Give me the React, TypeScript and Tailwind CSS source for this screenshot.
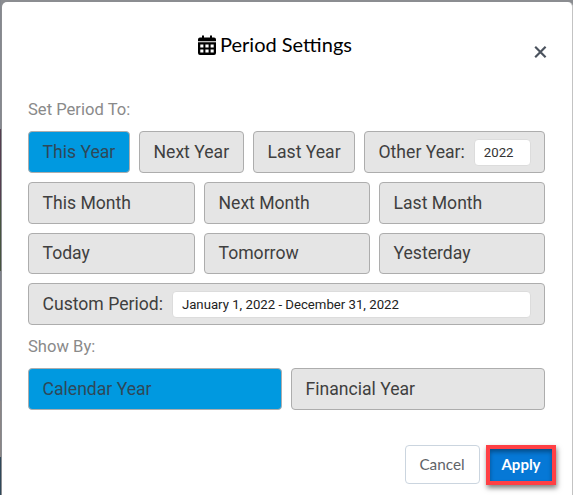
import React, { useState } from "react";

interface OptionProps {
  label: string;
  active?: boolean;
  className?: string;
  onClick?: () => void;
  children?: React.ReactNode;
}

const CalendarIcon = () => {
  return (
    <svg width="18" height="20" viewBox="0 0 18 20" fill="currentColor">
      <path d="M4 1.2a1 1 0 0 1 2 0V2.5h6V1.2a1 1 0 0 1 2 0V2.5h2a2 2 0 0 1 2 2V6.2H0V4.5a2 2 0 0 1 2-2h2z" />
      <path
        fillRule="evenodd"
        d="M0 7.2h18V18a2 2 0 0 1-2 2H2a2 2 0 0 1-2-2zM2.3 9.6v3h3.1v-3zM7.4 9.6v3h3.2v-3zM12.6 9.6v3h3.1v-3zM2.3 14.6v3h3.1v-3zM7.4 14.6v3h3.2v-3zM12.6 14.6v3h3.1v-3z"
      />
    </svg>
  );
};

const Option = ({ label, active, className, onClick, children }: OptionProps) => {
  return (
    <div
      onClick={onClick}
      className={`flex items-center rounded-[4px] border border-[#adadad] pl-[13.5px] text-[17.6px] leading-none whitespace-nowrap cursor-pointer ${
        active ? "bg-[#0099e0] text-[#2f4858]" : "bg-[#e5e5e5] text-[#3f3f3f]"
      } ${className ?? ""}`}
    >
      <span className="pt-px">{label}</span>
      {children}
    </div>
  );
};

const App = () => {
  const [period, setPeriod] = useState("This Year");
  const [showBy, setShowBy] = useState("Calendar Year");

  const option = (label: string) => (
    <Option
      key={label}
      label={label}
      active={period === label}
      onClick={() => setPeriod(label)}
    />
  );

  return (
    <div className="flex h-[495px] w-[573px] overflow-hidden bg-[#8b8d91] pt-[2px] font-['Roboto',sans-serif]">
      <div className="-mt-[2px] flex w-[1px] shrink-0 flex-col">
        <div className="h-[129px] bg-[#85888f]" />
        <div className="h-[71px] bg-[#553f50]" />
        <div className="h-[71px] bg-[#47543f]" />
        <div className="h-[130px] bg-[#7d808a]" />
        <div className="h-[56px] bg-[#8a8585]" />
        <div className="flex-1 bg-[#30485a]" />
      </div>
      <div className="ml-px flex h-[520px] w-[571px] shrink-0 flex-col rounded-[5px] border-r border-[#c3c3c3] bg-white pr-[27px] pl-[26px]">
        <div className="relative flex h-[88px] items-start justify-center pt-[31px] font-['Lato',sans-serif] text-black">
          <div className="flex items-center gap-[4px] pr-[23px]">
            <CalendarIcon />
            <h1 className="pb-[2px] text-[20px] leading-[22px]">Period Settings</h1>
          </div>
          <button className="absolute top-[44px] right-[-2px] text-[#4b535e]">
            <svg width="13" height="12" viewBox="0 0 13 12" fill="none">
              <path d="M1.2 0.8L11.6 11.2M11.6 0.8L1.2 11.2" stroke="currentColor" strokeWidth="2.2" />
            </svg>
          </button>
        </div>

        <p className="h-[41px] pt-[8px] text-[16.6px] leading-[24px] text-[#8a8a8a]">
          Set Period To:
        </p>
        <div className="grid h-[42px] grid-cols-[102px_105px_102px_181px] gap-[9px]">
          {["This Year", "Next Year", "Last Year"].map(option)}
          <Option label="Other Year:">
            <input
              className="ml-[9px] h-[27px] w-[57px] rounded-[4px] border border-[#dcdcdc] bg-white pl-[9px] text-[13.2px] text-[#333]"
              defaultValue="2022"
            />
          </Option>
        </div>
        <div className="mt-[9px] grid h-[92px] grid-cols-[167px_166px_166px] grid-rows-[42px_41px] gap-[9px]">
          {[
            "This Month",
            "Next Month",
            "Last Month",
            "Today",
            "Tomorrow",
            "Yesterday",
          ].map(option)}
        </div>
        <Option label="Custom Period:" className="mt-[9px] h-[42px] shrink-0">
          <input
            className="ml-[9px] h-[27px] w-[359px] rounded-[4px] border border-[#dcdcdc] bg-white pl-[9px] text-[13.2px] text-[#222]"
            defaultValue="January 1, 2022 - December 31, 2022"
          />
        </Option>

        <p className="h-[43px] pt-[10px] text-[16.6px] leading-[24px] text-[#8a8a8a]">
          Show By:
        </p>
        <div className="grid h-[42px] grid-cols-[254px_254px] gap-[9px]">
          {["Calendar Year", "Financial Year"].map((label) => (
            <Option
              key={label}
              label={label}
              active={showBy === label}
              onClick={() => setShowBy(label)}
            />
          ))}
        </div>

        <div className="-mr-[11px] mt-[35px] flex items-start justify-end gap-[6px] font-['Lato',sans-serif] text-[15px]">
          <button className="h-[39px] w-[75px] rounded-[4px] border border-[#cbd5df] bg-white pr-px text-[15.3px] text-[#5f6368]">
            Cancel
          </button>
          <button className="h-[40px] w-[70px] border-4 border-[#ff4045] bg-[#0678d6] pb-px font-bold text-white shadow-[1px_3px_5px_rgba(0,0,0,0.5),inset_0_3px_4px_rgba(0,0,0,0.35)]">
            Apply
          </button>
        </div>
      </div>
    </div>
  );
};

export default App;
